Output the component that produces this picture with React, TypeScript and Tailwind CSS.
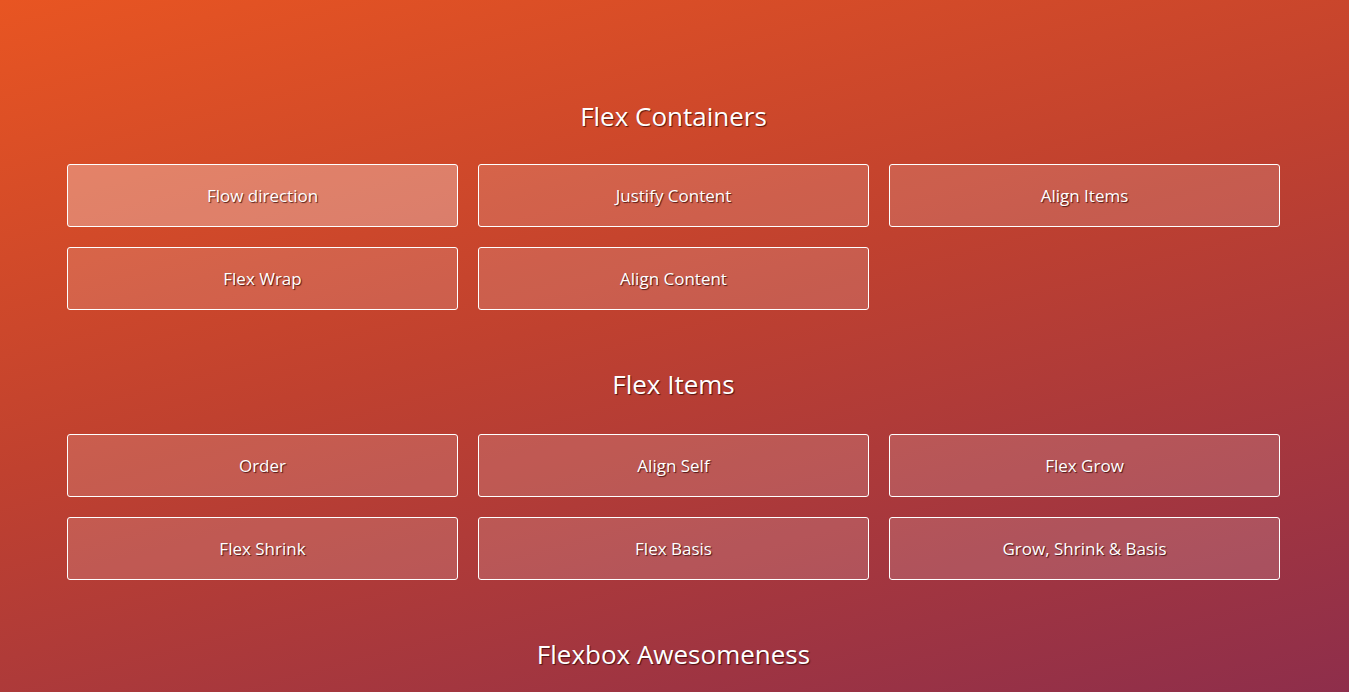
const containers = ["Flow direction", "Justify Content", "Align Items", "Flex Wrap", "Align Content"];
const items = ["Order", "Align Self", "Flex Grow", "Flex Shrink", "Flex Basis", "Grow, Shrink & Basis"];

function Tile({ label, active }: { label: string; active?: boolean }) {
  return (
    <a
      href="#"
      className={`flex h-[63px] items-center justify-center rounded-[3px] border border-white text-[17px] text-white [text-shadow:1px_1px_1px_rgba(40,0,0,0.75)] ${
        active ? "bg-white/30" : "bg-white/15"
      }`}
    >
      {label}
    </a>
  );
}

function Heading({ children }: { children: string }) {
  return (
    <h2 className="text-center text-[26px] leading-[30px] font-medium text-white [text-shadow:1px_1px_1px_rgba(40,0,0,0.7)]">
      {children}
    </h2>
  );
}

function Section({ title, labels, first }: { title: string; labels: string[]; first?: boolean }) {
  return (
    <section className={first ? "" : "mt-[59px]"}>
      <Heading>{title}</Heading>
      <div className={`grid grid-cols-3 gap-[20px] ${first ? "mt-[33px]" : "mt-[35px]"}`}>
        {labels.map((l, i) => (
          <Tile key={l} label={l} active={first && i === 0} />
        ))}
      </div>
    </section>
  );
}

export default function App() {
  return (
    <div className="h-[692px] overflow-hidden bg-[linear-gradient(165deg,#e85522_0%,#c0412f_45%,#8e2e4b_100%)] font-['Open_Sans','Noto_Sans',sans-serif]">
      <div className="ml-[67px] w-[1213px] pt-[101px]">
        <Section title="Flex Containers" labels={containers} first />
        <Section title="Flex Items" labels={items} />
        <section className="mt-[59px]">
          <Heading>Flexbox Awesomeness</Heading>
        </section>
      </div>
    </div>
  );
}
